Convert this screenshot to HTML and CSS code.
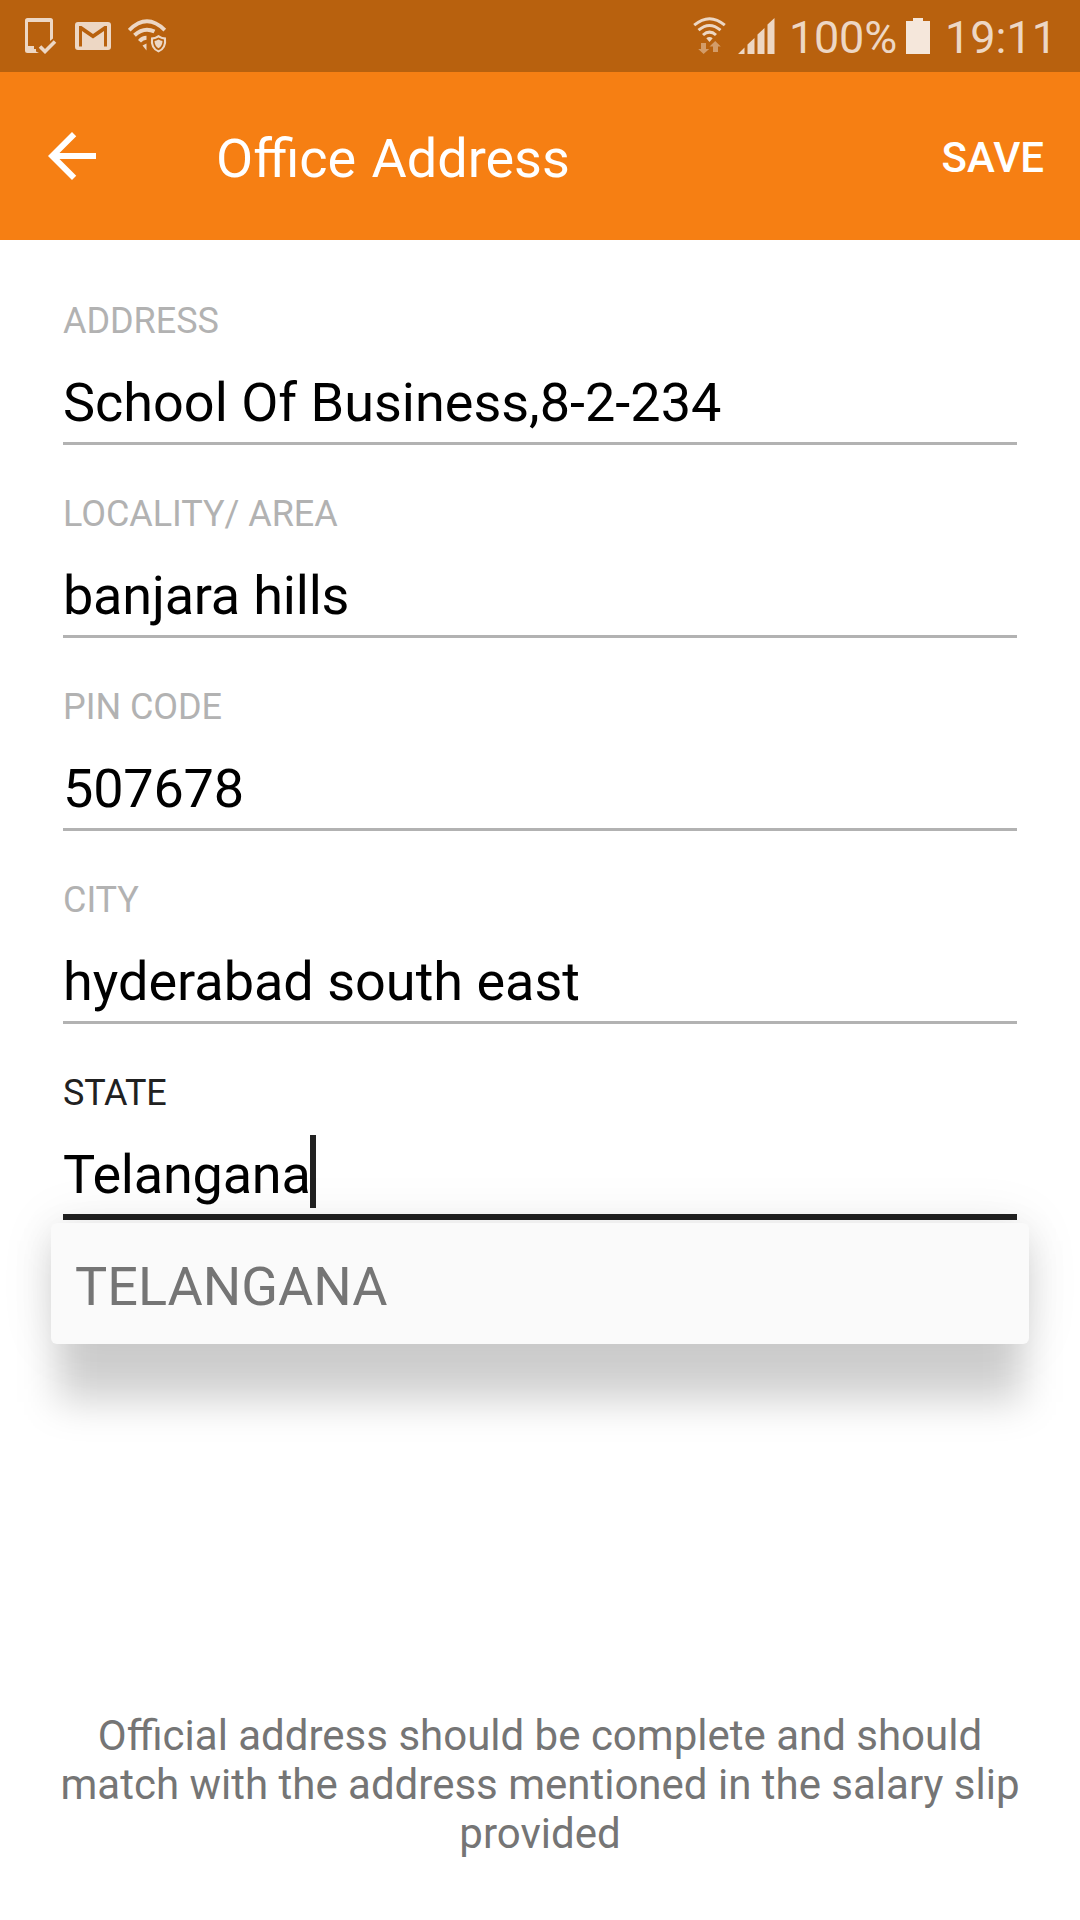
FILE: index.html
```html
<!DOCTYPE html>
<html lang="en">
<head>
<meta charset="utf-8">
<title>Office Address</title>
<link rel="stylesheet" href="styles.css">
</head>
<body>
<div class="screen">
  <div class="status-bar">
    <div class="notifications">
      <svg class="icon-device" width="32" height="36" viewBox="25 18 32 36">
        <path d="M39 53H27.500Q25 53 25 50.500V20.500Q25 18 27.500 18H50.500Q53 18 53 20.500V38.500L50 41V22H28V46H34V49H36V51.500Z"/>
        <path d="M40 46.500L45 51.500L55 41.500" fill="none" stroke="currentColor" stroke-width="3.600"/>
      </svg>
      <svg class="icon-mail" width="36" height="28" viewBox="75 22 36 28">
        <path fill-rule="evenodd" d="M78 22H108Q111 22 111 25V47Q111 50 108 50H78Q75 50 75 47V25Q75 22 78 22ZM79 26V46.500H82V31L93 38.500L104 31V46.500H107V26H104.500L93 34L81.500 26Z"/>
      </svg>
      <svg class="icon-secure-wifi" width="40" height="34" viewBox="128 20 40 34">
        <g fill="none" stroke="currentColor">
          <path d="M129.200 31.200Q147 13.500 164.800 31.200" stroke-width="3.800"/>
          <path d="M134.500 36.200Q144 27.500 154.500 32.500" stroke-width="4"/>
          <path d="M139.500 42.200Q142.500 38.800 146.500 38.800" stroke-width="4"/>
        </g>
        <path d="M142.500 46.500L146.500 44.500V51.500Z"/>
        <path fill-rule="evenodd" d="M158.500 36Q162 38.500 166 38.500Q167.500 50 158.500 53.500Q149.500 50 151 38.500Q155 38.500 158.500 36ZM158.500 38.600Q156 40.200 153 40.400Q152.300 48.500 158.500 51.300Q164.700 48.500 164 40.400Q161 40.200 158.500 38.600Z"/>
        <path d="M158.500 40.500Q160.500 41.700 162.500 42Q162.500 47 158.500 49.300Q154.500 47 154.500 42Q156.500 41.700 158.500 40.500Z"/>
      </svg>
    </div>
    <div class="system">
      <svg class="icon-wifi" width="34" height="38" viewBox="693 17 34 38">
        <g fill="none" stroke="currentColor" stroke-width="3">
          <path d="M694.200 25.200Q709.500 12.200 724.800 25.200"/>
          <path d="M698.500 30.200Q709.500 20.800 720.500 30.200"/>
          <path d="M703 35Q709.500 29.200 716 35"/>
        </g>
        <path d="M706.300 38.300Q709.500 35.800 712.700 38.300L709.500 42Z"/>
        <path class="traffic" d="M701 43H706V49H709.200L703.600 54L698.200 49H701ZM713 52V46.500H709.500L715.200 41L720.800 46.500H718V52Z"/>
      </svg>
      <svg class="icon-signal" width="37" height="36" viewBox="737.500 18 37 36">
        <path d="M737.500 54L744 47.500V54ZM747 44.500L754 38V54H747ZM757 34.500L764 28V54H757ZM767 24.500L774 18V54H767Z"/>
      </svg>
      <span class="battery-level">100%</span>
      <svg class="icon-battery" width="24" height="36" viewBox="0 0 24 36">
        <path d="M7 0H17V3H24V36H0V3H7Z"/>
      </svg>
      <span class="clock">19:11</span>
    </div>
  </div>

  <header class="app-bar">
    <svg class="back" width="72" height="72" viewBox="0 0 24 24">
      <path d="M20 11H7.830l5.590-5.590L12 4l-8 8 8 8 1.410-1.410L7.830 13H20v-2z"/>
    </svg>
    <h1 class="title">Office Address</h1>
    <span class="save">SAVE</span>
  </header>

  <main class="form">
    <div class="field"><div class="label">ADDRESS</div><div class="value">School Of Business,8-2-234</div></div>
    <div class="field"><div class="label">LOCALITY/ AREA</div><div class="value tight">banjara hills</div></div>
    <div class="field"><div class="label">PIN CODE</div><div class="value tight">507678</div></div>
    <div class="field"><div class="label">CITY</div><div class="value">hyderabad south east</div></div>
    <div class="field focused">
      <div class="label">STATE</div>
      <div class="value tight"><span class="typed">Telangana<i class="caret"></i></span></div>
      <div class="suggestions">TELANGANA</div>
    </div>
  </main>

  <p class="note">Official address should be complete and should match with the address mentioned in the salary slip provided</p>
</div>
</body>
</html>
```

FILE: styles.css
```css
* { box-sizing: border-box; }

body {
  margin: 0;
  background: #fff;
  font-family: Roboto, "Liberation Sans", sans-serif;
}

svg { display: block; fill: currentColor; flex: none; }

.screen {
  width: 1080px;
  height: 1920px;
  display: flex;
  flex-direction: column;
  overflow: hidden;
  isolation: isolate;
}

.status-bar {
  height: 72px;
  flex: none;
  display: flex;
  justify-content: space-between;
  padding: 0 23px 0 25px;
  background: #b8610e;
  color: #edd7c4;
}

.notifications, .system { display: flex; align-items: center; }
.icon-mail { margin-left: 18px; }
.icon-secure-wifi { margin-left: 17px; }
.traffic { opacity: 0.5; }
.icon-signal { margin-left: 11px; }
.icon-battery { margin: 0 15px 0 9px; color: #f5e7db; }

.battery-level, .clock {
  font-size: 45px;
  line-height: 54px;
  margin-top: 4px;
}
.battery-level { margin-left: 14px; letter-spacing: -0.2px; }

.app-bar {
  height: 168px;
  flex: none;
  display: flex;
  align-items: center;
  padding: 0 36px;
  background: #f67f13;
  color: #fff;
}

.title {
  flex: 1;
  margin: 5px 0 0 108px;
  font-size: 54px;
  line-height: 64px;
  font-weight: 400;
  word-spacing: 2px;
}

.save {
  font-size: 42px;
  line-height: 50px;
  font-weight: 500;
  margin-top: 4px;
}

.form {
  flex: 1;
  display: flex;
  flex-direction: column;
  gap: 48px;
  padding: 60px 63px 0;
}

.field { position: relative; height: 145px; flex: none; }

.label {
  font-size: 36px;
  line-height: 42px;
  letter-spacing: -0.05px;
  color: #b2b2b2;
}

.value {
  margin-top: 29px;
  padding-bottom: 8px;
  font-size: 54px;
  line-height: 63px;
  color: #000;
  border-bottom: 3px solid #b2b2b2;
}

.tight { letter-spacing: -0.2px; }

.focused .label { color: #212121; letter-spacing: -0.2px; }
.focused .value { border-bottom: 6px solid #212121; }

.typed { position: relative; }

.caret {
  position: absolute;
  right: -5px;
  top: -8px;
  width: 6px;
  height: 73px;
  background: #212121;
}

.suggestions {
  position: absolute;
  top: 151px;
  left: -12px;
  right: -12px;
  height: 121px;
  padding: 0 24px;
  border-radius: 6px;
  background: #fafafa;
  color: #757575;
  font-size: 54px;
  line-height: 128px;
  box-shadow: 0 0 56px rgba(0, 0, 0, 0.08);
}

/* Key-light shadow: longer than the popup, so it is a blurred layer */
.suggestions::before {
  content: "";
  position: absolute;
  z-index: -1;
  inset: 18px 6px -58px;
  background: rgba(0, 0, 0, 0.175);
  filter: blur(19px);
}

.note {
  margin: 0;
  padding: 0 60px 62px;
  font-size: 42px;
  line-height: 49px;
  text-align: center;
  color: #757575;
}
```
